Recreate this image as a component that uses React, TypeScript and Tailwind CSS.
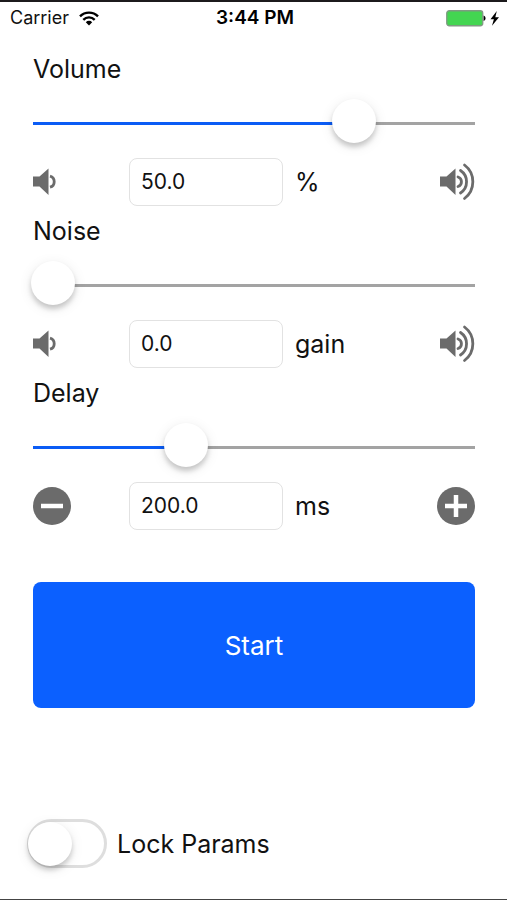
import { useState } from "react";
import clsx from "clsx";

const ICON = "#6b6b6b";

function WifiIcon() {
  return (
    <svg width="20" height="15" viewBox="0 0 20 15" fill="none" stroke="#000" strokeWidth="2.4" aria-hidden="true">
      <path d="M1 5.4a12.6 12.6 0 0 1 18 0" />
      <path d="M4.3 8.8a8 8 0 0 1 11.4 0" />
      <path d="M10 14.4 6.8 11.2a4.5 4.5 0 0 1 6.4 0z" fill="#000" stroke="none" />
    </svg>
  );
}

function BatteryIcon() {
  return (
    <svg width="54" height="17" viewBox="0 0 54 17" aria-hidden="true">
      <rect x="0.75" y="0.75" width="36" height="15" rx="2.5" fill="#43d551" stroke="#7f9a82" strokeWidth="1.3" />
      <path d="M37.6 5.5c1.2.3 1.9 1.5 1.9 2.75s-.7 2.45-1.9 2.75z" fill="#000" />
      <path d="M50.8 1 44.5 9.3h3.4L46 15.8 53 7.3h-3.7z" fill="#000" />
    </svg>
  );
}

function SpeakerIcon({ loud = false }: { loud?: boolean }) {
  return (
    <svg width={loud ? 35 : 24} height="38" viewBox={loud ? "0 0 35 38" : "0 0 24 38"} fill="none" aria-hidden="true">
      <path d="M0 13.5h6.5L15.5 5.5V32L6.5 23.5H0z" fill={ICON} />
      {loud ? (
        <g stroke={ICON} strokeWidth="2.8" strokeLinecap="round">
          <path d="M18 14a5 5 0 0 1 0 9.5" />
          <path d="M20.5 7.5a13.5 13.5 0 0 1 0 22.5" />
          <path d="M24.5 2a21 21 0 0 1 0 33.5" />
        </g>
      ) : (
        <path d="M17 13.2a5.7 5.7 0 0 1 0 11" stroke={ICON} strokeWidth="2.8" />
      )}
    </svg>
  );
}

function StepButton({ label, plus = false, onClick }: { label: string; plus?: boolean; onClick: () => void }) {
  return (
    <button type="button" aria-label={label} onClick={onClick}>
      <svg width="38" height="38" viewBox="0 0 38 38" aria-hidden="true">
        <circle cx="19" cy="19" r="19" fill={ICON} />
        <path d={plus ? "M8 19h22M19 8v22" : "M8 19h22"} stroke="#fff" strokeWidth="4.5" />
      </svg>
    </button>
  );
}

function Slider({ label, value, onChange }: { label: string; value: number; onChange: (v: number) => void }) {
  return (
    <input
      type="range"
      aria-label={label}
      min={0}
      max={1000}
      value={value}
      onChange={(e) => onChange(Number(e.target.value))}
      className={clsx(
        "-mx-0.5 block h-11 appearance-none bg-[length:calc(100%-4px)_3px] bg-[position:2px_23px] bg-no-repeat",
        "[&::-webkit-slider-thumb]:size-11 [&::-webkit-slider-thumb]:appearance-none [&::-webkit-slider-thumb]:rounded-full",
        "[&::-webkit-slider-thumb]:bg-white [&::-webkit-slider-thumb]:shadow-[0_4px_5px_rgba(0,0,0,0.18),0_3px_14px_rgba(0,0,0,0.09)]"
      )}
      style={{
        backgroundImage: `linear-gradient(to right, #0b5cf5 ${value / 10}%, #a3a3a3 ${value / 10}%)`,
      }}
    />
  );
}

function Param({
  id,
  label,
  unit,
  text,
  position,
  stepper = false,
}: {
  id: string;
  label: string;
  unit: string;
  text: string;
  position: number;
  stepper?: boolean;
}) {
  const [current, setCurrent] = useState(text);
  const [pos, setPos] = useState(position);
  const step = (d: number) => setCurrent((v) => (Number(v) + d).toFixed(1));

  return (
    <section className="flex flex-col">
      <label htmlFor={id} className="self-start text-[25px] leading-[30px]">
        {label}
      </label>
      <div className="mt-[15px] flex flex-col">
        <Slider label={`${label} slider`} value={pos} onChange={setPos} />
      </div>
      <div className="mt-[15px] grid grid-cols-[96px_154px_1fr_auto] items-center">
        {stepper ? <StepButton label="Decrease" onClick={() => step(-1)} /> : <SpeakerIcon />}
        <input
          id={id}
          type="text"
          value={current}
          onChange={(e) => setCurrent(e.target.value)}
          className="h-12 min-w-0 rounded-lg border border-[#e2e2e2] px-[11px] pb-0.5 text-[21px]"
        />
        <span className="pl-3 text-[25px] leading-[30px]">{unit}</span>
        {stepper ? <StepButton plus label="Increase" onClick={() => step(1)} /> : <SpeakerIcon loud />}
      </div>
    </section>
  );
}

export default function App() {
  const [running, setRunning] = useState(false);
  const [locked, setLocked] = useState(false);

  return (
    <div className="flex min-h-screen flex-col border-t-2 border-b border-t-[#1c1a1c] border-b-[#444] bg-white font-['Inter',sans-serif] text-[#111]">
      <header className="grid grid-cols-[1fr_auto_1fr] items-center pt-1 pr-[7px] pl-[10px] text-[18px] leading-6">
        <div className="flex items-center gap-[10px]">
          Carrier
          <WifiIcon />
        </div>
        <span className="text-[19px] font-semibold text-black">3:44 PM</span>
        <div className="flex justify-end">
          <BatteryIcon />
        </div>
      </header>

      <main className="flex flex-col px-8 pt-6 pl-[33px]">
        <div className="flex flex-col gap-[10px]">
          <Param id="volume" label="Volume" unit="%" text="50.0" position={749} />
          <Param id="noise" label="Noise" unit="gain" text="0.0" position={0} />
          <Param id="delay" label="Delay" unit="ms" text="200.0" position={332} stepper />
        </div>

        <button
          type="button"
          onClick={() => setRunning(!running)}
          className="mt-[52px] h-[126px] rounded-lg bg-[#0b60ff] text-[26px] text-white"
        >
          {running ? "Stop" : "Start"}
        </button>

        <div className="mt-[111px] -ml-1.5 flex items-center gap-[10px]">
          <input
            id="lock"
            type="checkbox"
            role="switch"
            checked={locked}
            onChange={(e) => setLocked(e.target.checked)}
            className={clsx(
              "h-[49px] w-20 appearance-none rounded-full border-[3px] border-[#dedede]",
              "before:block before:size-11 before:rounded-full before:bg-white before:shadow-[0_4px_5px_rgba(0,0,0,0.18),0_3px_14px_rgba(0,0,0,0.09)]",
              locked ? "bg-[#43d551] before:ml-auto" : "before:-ml-0.5"
            )}
          />
          <label htmlFor="lock" className="text-[25px] leading-[30px]">
            Lock Params
          </label>
        </div>
      </main>
    </div>
  );
}
